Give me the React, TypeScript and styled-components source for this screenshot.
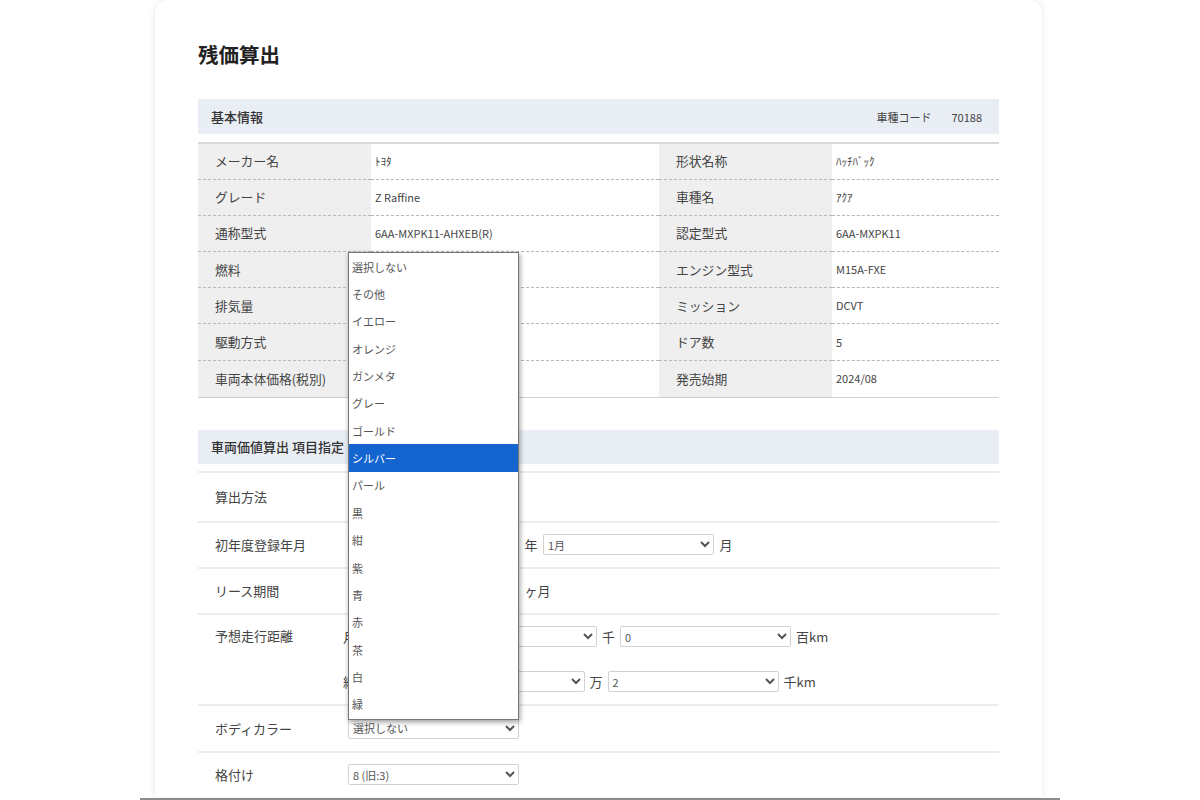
import styled, { createGlobalStyle } from "styled-components";

const GlobalStyle = createGlobalStyle`
  html, body {
    margin: 0;
    padding: 0;
    background: #fff;
  }
  body {
    font-family: "Noto Sans CJK JP", "Noto Sans", sans-serif;
    color: #333;
  }
`;

const Page = styled.div`
  width: 920px;
  height: 800px;
  margin: 0 auto;
  box-sizing: border-box;
  padding: 0 18px 0 15px;
  border-bottom: 2px solid #8c8c8c;
  overflow: hidden;
`;

const Card = styled.main`
  height: 797px;
  box-sizing: border-box;
  padding: 39px 43px 0;
  background: #fff;
  border-radius: 12px 12px 0 0;
  box-shadow: 0 0 6px rgba(0, 0, 0, 0.1);
`;

const Title = styled.h1`
  margin: 0 0 30px;
  font-size: 20.5px;
  line-height: 30px;
  font-weight: 700;
  color: #222;
`;

const SectionHead = styled.div<{ $height: number; $gap: number }>`
  display: flex;
  justify-content: space-between;
  align-items: center;
  height: ${(p) => p.$height}px;
  margin-bottom: ${(p) => p.$gap}px;
  padding: 0 17px 0 13px;
  background: #e9eef5;
  font-size: 13px;
  font-weight: 500;
  color: #333;
`;

const CarCode = styled.span`
  display: flex;
  gap: 20px;
  font-size: 11px;
  font-weight: 400;
  color: #444;
`;

const SpecTable = styled.div`
  display: grid;
  grid-template-columns: 173px 288px 173px 167px;
  grid-auto-rows: 36.2px;
  margin-bottom: 32.1px;
  border-top: 2px solid #d9d9d5;
  border-bottom: 1px solid #cfcfcf;
`;

const SpecLabel = styled.div<{ $last?: boolean }>`
  display: flex;
  align-items: center;
  padding: 0 0 1px 17px;
  background: #efefef;
  font-size: 12.8px;
  color: #444;
  border-bottom: ${(p) => (p.$last ? "none" : "1px dashed #b8b8b8")};
`;

const SpecValue = styled.div<{ $last?: boolean }>`
  display: flex;
  align-items: center;
  padding: 0 0 1px 4px;
  font-size: 11px;
  color: #444;
  border-bottom: ${(p) => (p.$last ? "none" : "1px dashed #b8b8b8")};
`;

const FormRow = styled.div<{ $height: number }>`
  display: flex;
  align-items: center;
  height: ${(p) => p.$height}px;
  box-sizing: border-box;
  border-top: 2px solid #ececec;
`;

const FormLabel = styled.div`
  flex: 0 0 133px;
  padding-left: 17px;
  font-size: 13px;
  color: #444;
`;

const Fields = styled.div`
  display: flex;
  align-items: center;
  gap: 5.5px;
  font-size: 13px;
  color: #444;
`;

const DistanceRow = styled(FormRow)`
  align-items: flex-start;
  padding-top: 11.5px;
`;

const DistanceStack = styled.div`
  display: flex;
  flex-direction: column;
  gap: 24px;
  margin-left: -5px;
`;

const DistanceFields = styled(Fields)`
  gap: 5px;
`;

const DistanceLabel = styled.span<{ $width: number }>`
  width: ${(p) => p.$width}px;
  white-space: nowrap;
`;

const Select = styled.select`
  width: 171px;
  height: 21px;
  box-sizing: border-box;
  padding: 0;
  background: #fff;
  border: 1px solid #d2d2d2;
  border-radius: 2px;
  font-family: inherit;
  font-size: 11px;
  color: #555;
`;

const ColorField = styled.div`
  position: relative;
  display: flex;
`;

const ColorList = styled.ul`
  position: absolute;
  left: 0;
  bottom: 100%;
  z-index: 5;
  width: 171px;
  box-sizing: border-box;
  margin: 0 0 -2px;
  padding: 0 0 1px;
  list-style: none;
  background: #fff;
  border: 1px solid #777;
  box-shadow: 1px 2px 5px rgba(0, 0, 0, 0.4);
`;

const ColorItem = styled.li<{ $selected?: boolean }>`
  display: flex;
  align-items: center;
  height: 27.35px;
  padding-left: 3px;
  box-sizing: border-box;
  font-size: 11px;
  color: ${(p) => (p.$selected ? "#fff" : "#555")};
  background: ${(p) => (p.$selected ? "#1565d0" : "transparent")};
`;

const specs = [
  ["メーカー名", "ﾄﾖﾀ", "形状名称", "ﾊｯﾁﾊﾞｯｸ"],
  ["グレード", "Z Raffine", "車種名", "ｱｸｱ"],
  ["通称型式", "6AA-MXPK11-AHXEB(R)", "認定型式", "6AA-MXPK11"],
  ["燃料", "", "エンジン型式", "M15A-FXE"],
  ["排気量", "", "ミッション", "DCVT"],
  ["駆動方式", "", "ドア数", "5"],
  ["車両本体価格(税別)", "", "発売始期", "2024/08"],
];

const colors = [
  "選択しない",
  "その他",
  "イエロー",
  "オレンジ",
  "ガンメタ",
  "グレー",
  "ゴールド",
  "シルバー",
  "パール",
  "黒",
  "紺",
  "紫",
  "青",
  "赤",
  "茶",
  "白",
  "緑",
];

const Picker = ({ value }: { value: string }) => (
  <Select defaultValue={value}>
    <option value={value}>{value}</option>
  </Select>
);

const App = () => {
  return (
    <>
      <GlobalStyle />
      <Page>
        <Card>
          <Title>残価算出</Title>

          <SectionHead $height={35} $gap={7.5}>
            基本情報
            <CarCode>
              <span>車種コード</span>
              <span>70188</span>
            </CarCode>
          </SectionHead>
          <SpecTable>
            {specs.map((row, i) => {
              const last = i === specs.length - 1;
              return [
                <SpecLabel key={`${i}a`} $last={last}>{row[0]}</SpecLabel>,
                <SpecValue key={`${i}b`} $last={last}>{row[1]}</SpecValue>,
                <SpecLabel key={`${i}c`} $last={last}>{row[2]}</SpecLabel>,
                <SpecValue key={`${i}d`} $last={last}>{row[3]}</SpecValue>,
              ];
            })}
          </SpecTable>

          <SectionHead $height={34} $gap={7}>車両価値算出 項目指定</SectionHead>

          <FormRow $height={50}>
            <FormLabel>算出方法</FormLabel>
          </FormRow>
          <FormRow $height={46}>
            <FormLabel>初年度登録年月</FormLabel>
            <Fields>
              <Picker value="" />
              <span>年</span>
              <Picker value="1月" />
              <span>月</span>
            </Fields>
          </FormRow>
          <FormRow $height={46}>
            <FormLabel>リース期間</FormLabel>
            <Fields>
              <Picker value="" />
              <span>ヶ月</span>
            </Fields>
          </FormRow>
          <DistanceRow $height={91}>
            <FormLabel>予想走行距離</FormLabel>
            <DistanceStack>
              <DistanceFields>
                <DistanceLabel $width={78}>月間走行距離</DistanceLabel>
                <Picker value="" />
                <span>千</span>
                <Picker value="0" />
                <span>百km</span>
              </DistanceFields>
              <DistanceFields>
                <DistanceLabel $width={65.5}>総走行距離</DistanceLabel>
                <Picker value="" />
                <span>万</span>
                <Picker value="2" />
                <span>千km</span>
              </DistanceFields>
            </DistanceStack>
          </DistanceRow>
          <FormRow $height={47}>
            <FormLabel>ボディカラー</FormLabel>
            <ColorField>
              <ColorList>
                {colors.map((c) => (
                  <ColorItem key={c} $selected={c === "シルバー"}>
                    {c}
                  </ColorItem>
                ))}
              </ColorList>
              <Picker value="選択しない" />
            </ColorField>
          </FormRow>
          <FormRow $height={46}>
            <FormLabel>格付け</FormLabel>
            <Picker value="8 (旧:3)" />
          </FormRow>
        </Card>
      </Page>
    </>
  );
};

export default App;
